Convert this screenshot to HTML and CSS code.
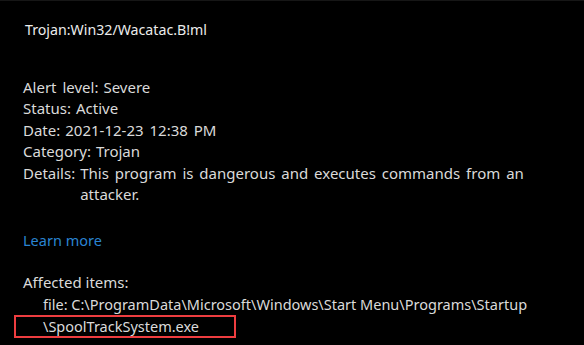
FILE: index.html
```html
<!DOCTYPE html>
<html lang="en">
<head>
  <meta charset="UTF-8">
  <meta name="viewport" content="width=device-width, initial-scale=1">
  <title>Threat details</title>
  <link rel="stylesheet" href="styles.css">
</head>
<body>

  <div class="threat">
    <div class="threat-name">Trojan:Win32/Wacatac.B!ml</div>

    <div class="info">
      <div class="row"><span class="label">Alert level:</span><span>Severe</span></div>
      <div class="row"><span class="label">Status:</span><span>Active</span></div>
      <div class="row"><span class="label">Date:</span><span>2021-12-23 12:38 PM</span></div>
      <div class="row"><span class="label">Category:</span><span>Trojan</span></div>
      <div class="row"><span class="label">Details:</span><span class="value">This program is dangerous and executes commands from an attacker.</span></div>
    </div>

    <a class="learn-more" href="#">Learn more</a>

    <div class="affected">
      <div class="affected-title">Affected items:</div>
      <div class="item">file: C:\ProgramData\Microsoft\Windows\Start Menu\Programs\Startup</div>
      <div class="item"><span class="highlight">\SpoolTrackSystem.exe</span></div>
    </div>
  </div>

</body>
</html>
```

FILE: styles.css
```css
* { margin:0; padding:0; box-sizing:border-box; }
body {
  background:#000;
  color:#dadada;
  font-family: "Noto Sans", "Open Sans", sans-serif;
  font-size: 14.5px;
  line-height: 21.5px;
  border-top: 1px solid #161616;
}

.threat {
  padding: 18px 0 0 23px;
}
.threat-name {
  color: #ececec;
  font-size: 14.2px;
  padding-left: 2px;
  margin-bottom: 36px;
}

.row {
  display: flex;
  gap: 5px;
  font-size: 15px;
  word-spacing: 2px;
}
.value { width: 470px; }

.learn-more {
  display: block;
  width: max-content;
  margin-top: 24px;
  color: #2a84d2;
  text-decoration: none;
}

.affected { margin-top: 21px; }
.affected-title { font-size: 15px; }
.item { padding-left: 20px; }
.highlight {
  display: inline-block;
  vertical-align: top;
  margin-left: -29px;
  padding-left: 27px;
  width: 222px;
  height: 23px;
  line-height: 19px;
  border: 2px solid #ee3d40;
}
```
